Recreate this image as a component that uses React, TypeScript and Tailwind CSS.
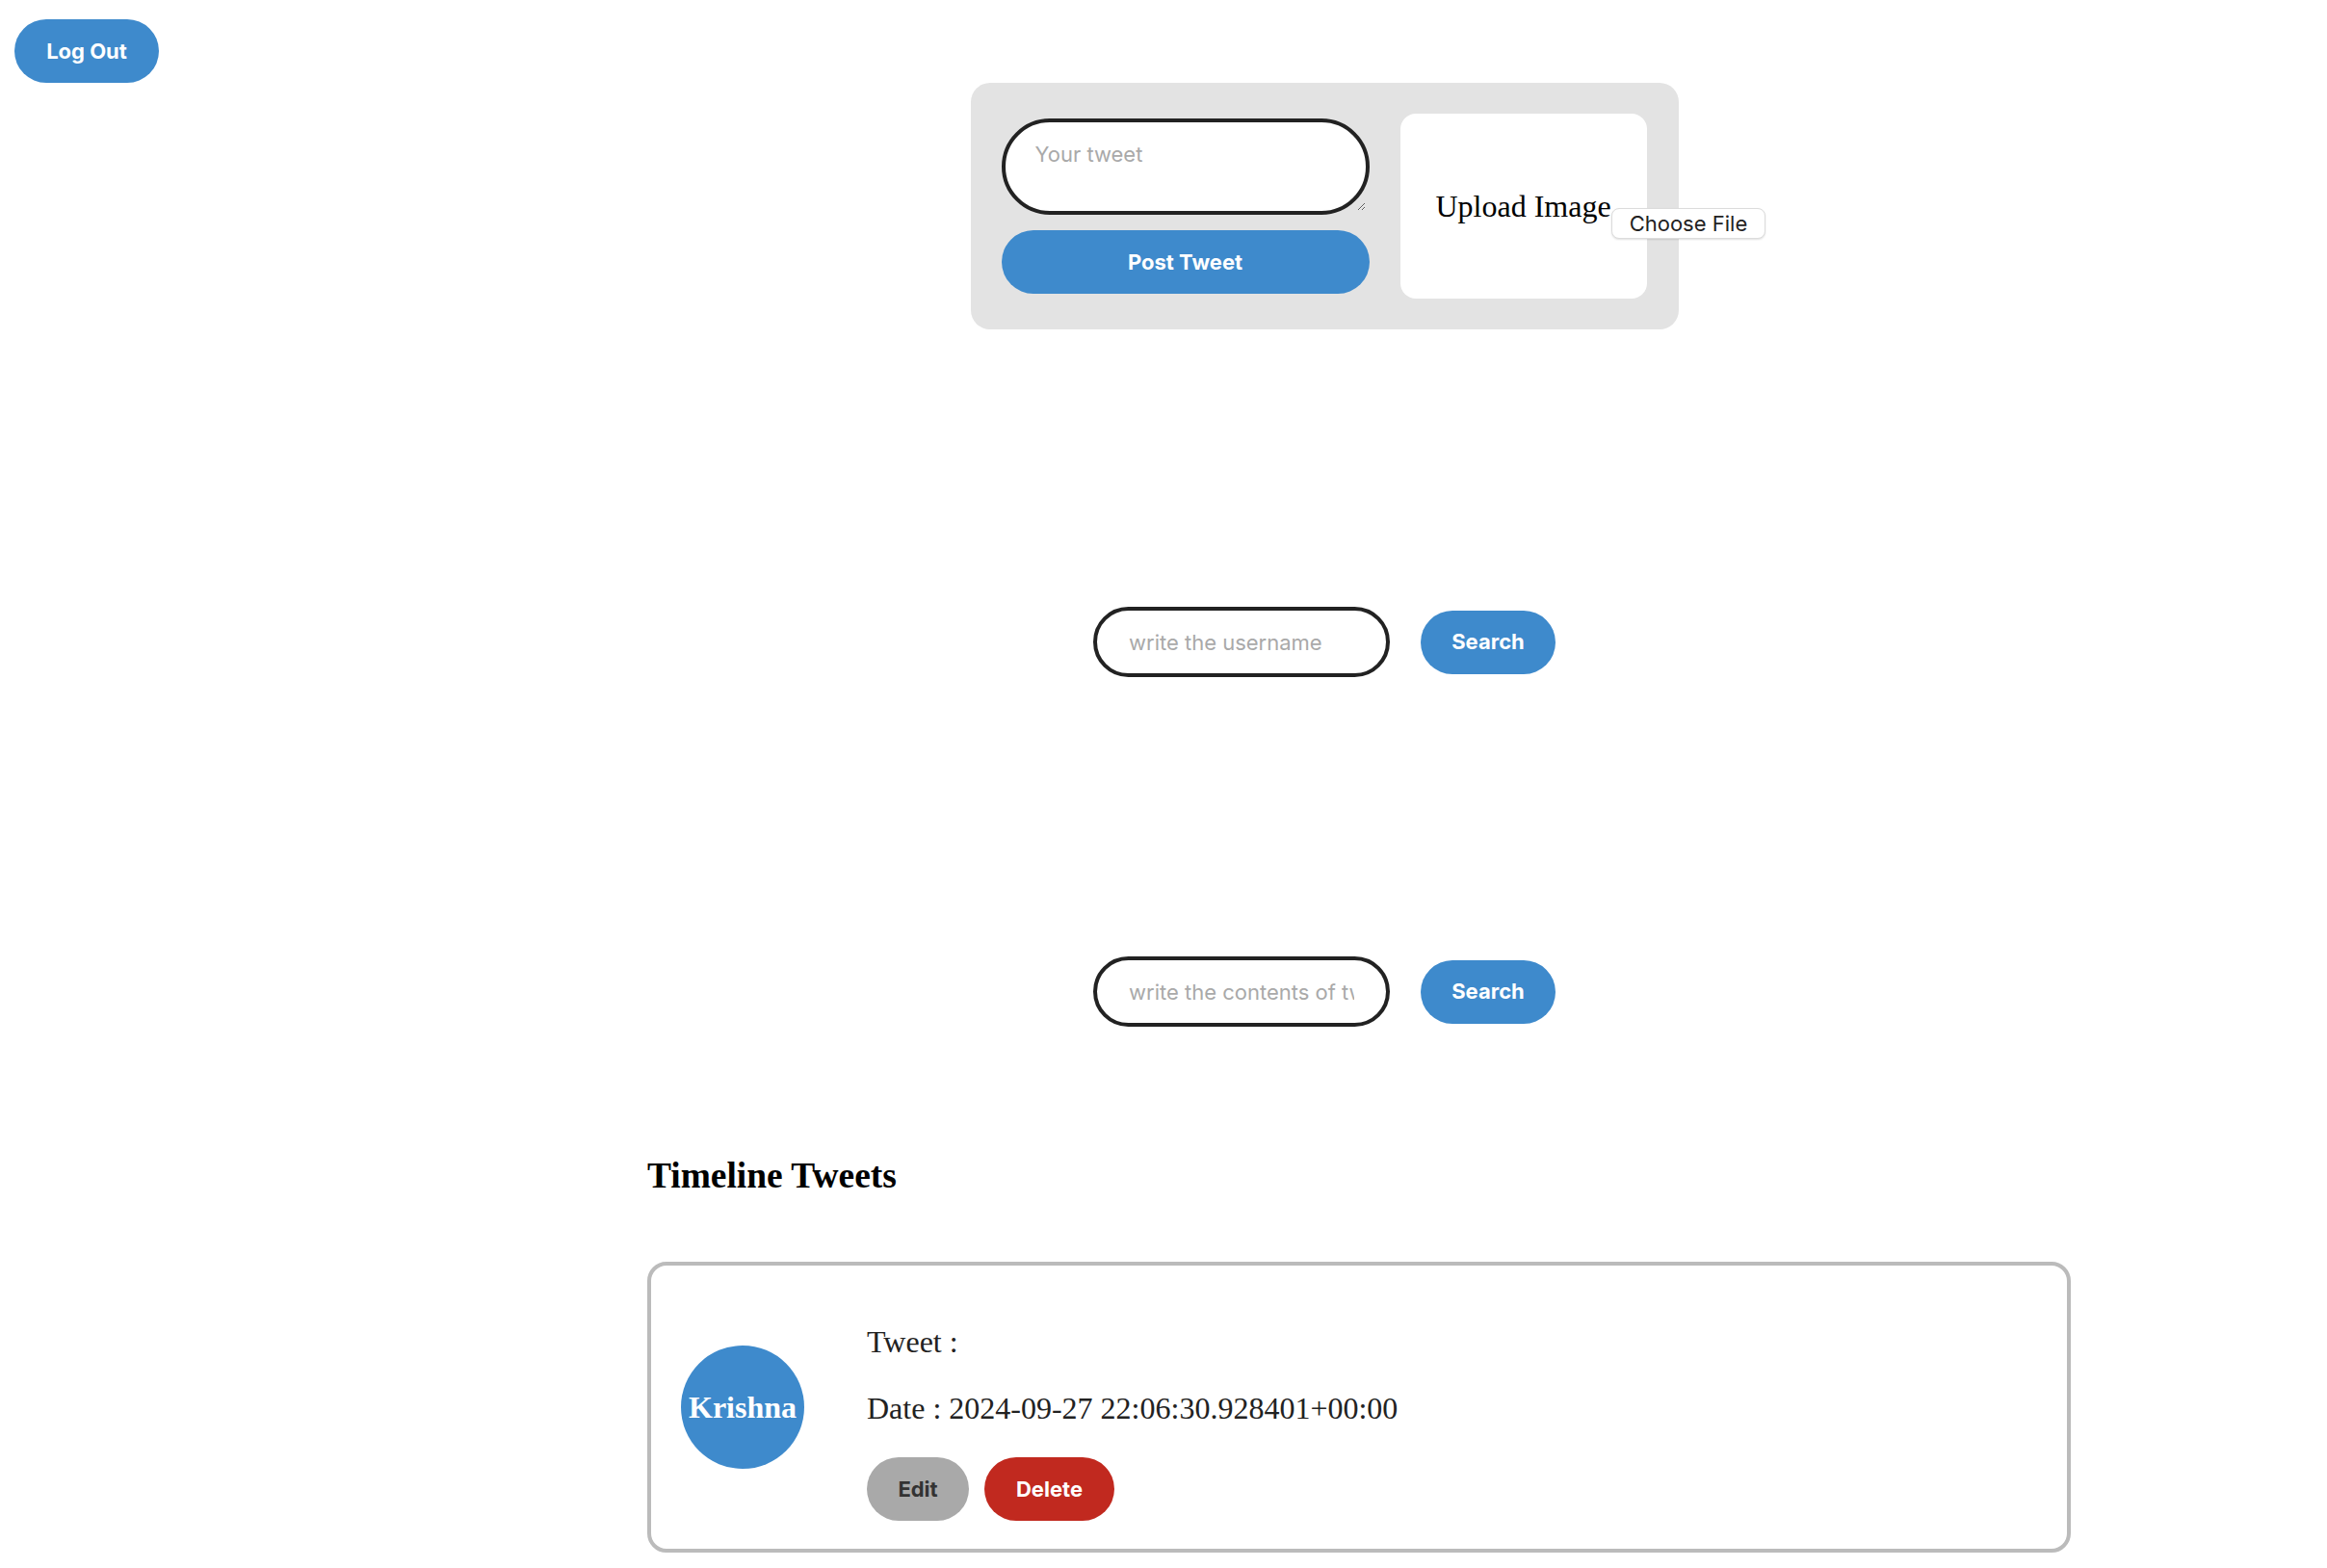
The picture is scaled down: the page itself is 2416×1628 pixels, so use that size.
import React from 'react';

const blue = 'bg-[#3e8acc]';

function SearchRow({ placeholder, className }: { placeholder: string; className?: string }) {
  return (
    <div className={`flex items-center justify-center gap-[32px] ${className ?? ''}`}>
      <input
        type="text"
        placeholder={placeholder}
        className="w-[308px] h-[73px] rounded-full border-[4px] border-[#222] bg-white px-[33px] text-[22px] text-[#222] placeholder:text-[#a9a9a9] outline-none"
      />
      <button className={`w-[140px] h-[66px] rounded-full ${blue} text-[22px] font-bold text-white`}>
        Search
      </button>
    </div>
  );
}

export default function App() {
  return (
    <div className="min-h-screen bg-white font-['Inter',sans-serif] text-black">
      <div className="pt-[20px] pl-[15px]">
        <button className={`w-[150px] h-[66px] rounded-full ${blue} text-[22px] font-bold text-white`}>
          Log Out
        </button>
      </div>

      <div className="ml-[672px] w-[1406px]">
        {/* compose */}
        <div className="mx-auto flex w-[735px] items-center gap-[32px] rounded-[20px] bg-[#e3e3e3] p-[32px]">
          <div className="flex w-[382px] flex-col gap-[16px]">
            <textarea
              placeholder="Your tweet"
              className="h-[100px] w-full rounded-full border-[4px] border-[#222] bg-white px-[31px] pt-[17px] text-[22px] text-[#222] placeholder:text-[#a9a9a9] outline-none"
            />
            <button className={`h-[66px] w-full rounded-full ${blue} text-[22px] font-bold text-white`}>
              Post Tweet
            </button>
          </div>
          <div className="flex h-[192px] w-[256px] shrink-0 items-center whitespace-nowrap rounded-[16px] bg-white pl-[37px]">
            <span className="font-['Liberation_Serif',serif] text-[32px] leading-[37px]">Upload Image</span>
            <span className="mt-[36px] flex h-[32px] shrink-0 items-center rounded-[8px] border border-[#dcdcdc] bg-white px-[18px] text-[22px] text-[#222] shadow-[0_1px_2px_rgba(0,0,0,0.12)]">
              Choose File
            </span>
          </div>
        </div>

        <SearchRow placeholder="write the username" className="mt-[288px]" />
        <SearchRow placeholder="write the contents of tweet" className="mt-[290px]" />

        <h3 className="mt-[133px] font-['Liberation_Serif',serif] text-[37.44px] font-bold leading-[43px]">
          Timeline Tweets
        </h3>

        <div className="mt-[68px] flex w-[1478px] items-center gap-[65px] rounded-[20px] border-[4px] border-[#bbb] px-[31px] py-[29px]">
          <div className="flex h-[128px] w-[128px] shrink-0 items-center justify-center rounded-full bg-[#3e8acc] font-['Liberation_Serif',serif] text-[32px] font-bold text-white">
            Krishna
          </div>
          <div className="flex flex-col font-['Liberation_Serif',serif] text-[32px] leading-[37px] text-[#222]">
            <p className="mt-[32px]">Tweet :</p>
            <p className="mt-[32px]">Date : 2024-09-27 22:06:30.928401+00:00</p>
            <div className="mt-[32px] flex gap-[16px] font-['Inter',sans-serif]">
              <button className="h-[66px] w-[106px] rounded-full bg-[#a9a9a9] text-[22px] font-bold text-[#333]">
                Edit
              </button>
              <button className="h-[66px] w-[135px] rounded-full bg-[#c1291f] text-[22px] font-bold text-white">
                Delete
              </button>
            </div>
          </div>
        </div>
      </div>
    </div>
  );
}
